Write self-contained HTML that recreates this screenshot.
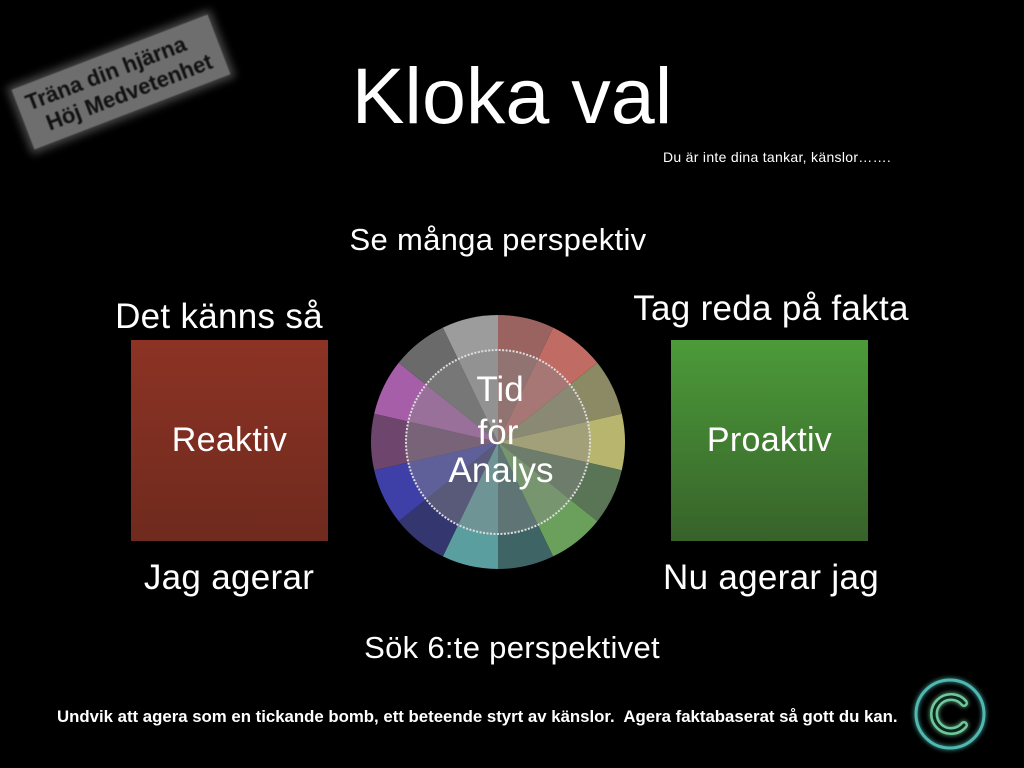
<!DOCTYPE html>
<html><head><meta charset="utf-8"><style>
html,body{margin:0;padding:0;background:#000;}
body{width:1024px;height:768px;position:relative;overflow:hidden;font-family:"Liberation Sans",Arial,sans-serif;color:#fff;}
.t{position:absolute;white-space:nowrap;transform:translateX(-50%);line-height:1;}
.box{position:absolute;width:197px;height:201px;display:flex;align-items:center;justify-content:center;font-size:34px;letter-spacing:0.3px;}
</style></head><body>
<div style="position:absolute;left:16px;top:50px;width:210px;height:64px;background:#6e6e6e;transform:rotate(-21deg);box-shadow:0 0 8px 4px #444;color:#111;font-weight:bold;font-size:22px;line-height:26px;padding:6px 0 0 9px;box-sizing:border-box;filter:blur(0.4px);">
<div>Träna din hjärna</div>
<div style="position:relative;left:12px;">Höj Medvetenhet</div>
</div>
<div class="t" style="left:512px;top:56px;font-size:79px;">Kloka val</div>
<div style="position:absolute;left:663px;top:149px;font-size:14px;letter-spacing:0.3px;">Du är inte dina tankar, känslor…….</div>
<div class="t" style="left:498px;top:224px;font-size:31px;letter-spacing:0.3px;">Se många perspektiv</div>
<div class="t" style="left:219px;top:299px;font-size:35px;letter-spacing:0.3px;">Det känns så</div>
<div class="t" style="left:771px;top:291px;font-size:35px;letter-spacing:0.3px;">Tag reda på fakta</div>
<div class="box" style="left:131px;top:340px;background:linear-gradient(#8c3324,#6f2a1e);">Reaktiv</div>
<div class="box" style="left:671px;top:340px;background:linear-gradient(#4c9b39,#37622a);">Proaktiv</div>
<div class="t" style="left:229px;top:560px;font-size:35px;letter-spacing:0.3px;">Jag agerar</div>
<div class="t" style="left:771px;top:560px;font-size:35px;letter-spacing:0.3px;">Nu agerar jag</div>
<div class="t" style="left:512px;top:632px;font-size:31px;letter-spacing:0.3px;">Sök 6:te perspektivet</div>
<div style="position:absolute;left:57px;top:707px;font-size:16.8px;font-weight:bold;white-space:nowrap;">Undvik att agera som en tickande bomb, ett beteende styrt av känslor.&nbsp; Agera faktabaserat så gott du kan.</div>
<svg width="1024" height="768" style="position:absolute;left:0;top:0">
<g transform="translate(498,442)">
<path d="M0 0L0 -127A127 127 0 0 1 55.1 -114.4Z" fill="#9a6360"/>
<path d="M0 0L55.1 -114.4A127 127 0 0 1 99.3 -79.2Z" fill="#c06b64"/>
<path d="M0 0L99.3 -79.2A127 127 0 0 1 123.8 -28.3Z" fill="#8b8a64"/>
<path d="M0 0L123.8 -28.3A127 127 0 0 1 123.8 28.3Z" fill="#b8b56e"/>
<path d="M0 0L123.8 28.3A127 127 0 0 1 99.3 79.2Z" fill="#5a7555"/>
<path d="M0 0L99.3 79.2A127 127 0 0 1 55.1 114.4Z" fill="#6aa05c"/>
<path d="M0 0L55.1 114.4A127 127 0 0 1 0 127Z" fill="#3f6466"/>
<path d="M0 0L0 127A127 127 0 0 1 -55.1 114.4Z" fill="#5a9ea0"/>
<path d="M0 0L-55.1 114.4A127 127 0 0 1 -99.3 79.2Z" fill="#343670"/>
<path d="M0 0L-99.3 79.2A127 127 0 0 1 -123.8 28.3Z" fill="#3f3fa8"/>
<path d="M0 0L-123.8 28.3A127 127 0 0 1 -123.8 -28.3Z" fill="#6e456c"/>
<path d="M0 0L-123.8 -28.3A127 127 0 0 1 -99.3 -79.2Z" fill="#a75ea8"/>
<path d="M0 0L-99.3 -79.2A127 127 0 0 1 -55.1 -114.4Z" fill="#6a6a6a"/>
<path d="M0 0L-55.1 -114.4A127 127 0 0 1 0 -127Z" fill="#9c9c9c"/>
<circle r="92" fill="#888" fill-opacity="0.45" stroke="#ddd" stroke-width="2" stroke-dasharray="2 1.5"/>
<text x="2" y="-41" font-size="35" fill="#fff" text-anchor="middle" font-family="Liberation Sans, sans-serif">Tid</text>
<text x="0" y="2" font-size="35" fill="#fff" text-anchor="middle" font-family="Liberation Sans, sans-serif">för</text>
<text x="3" y="40" font-size="35" fill="#fff" text-anchor="middle" font-family="Liberation Sans, sans-serif">Analys</text>
</g>
<defs><filter id="gl" x="-50%" y="-50%" width="200%" height="200%"><feGaussianBlur stdDeviation="2.5" result="b"/><feMerge><feMergeNode in="b"/><feMergeNode in="SourceGraphic"/></feMerge></filter></defs>
<g filter="url(#gl)" fill="none">
<circle cx="950" cy="714" r="34" stroke="#4fb8b0" stroke-width="3"/>
<path d="M964 703 A17 17 0 1 0 964 725" stroke="#6fc89a" stroke-width="8" stroke-linecap="round"/>
<path d="M964 703 A17 17 0 1 0 964 725" stroke="#0a2a20" stroke-width="3" stroke-linecap="round"/>
</g>
</svg>
</body></html>
